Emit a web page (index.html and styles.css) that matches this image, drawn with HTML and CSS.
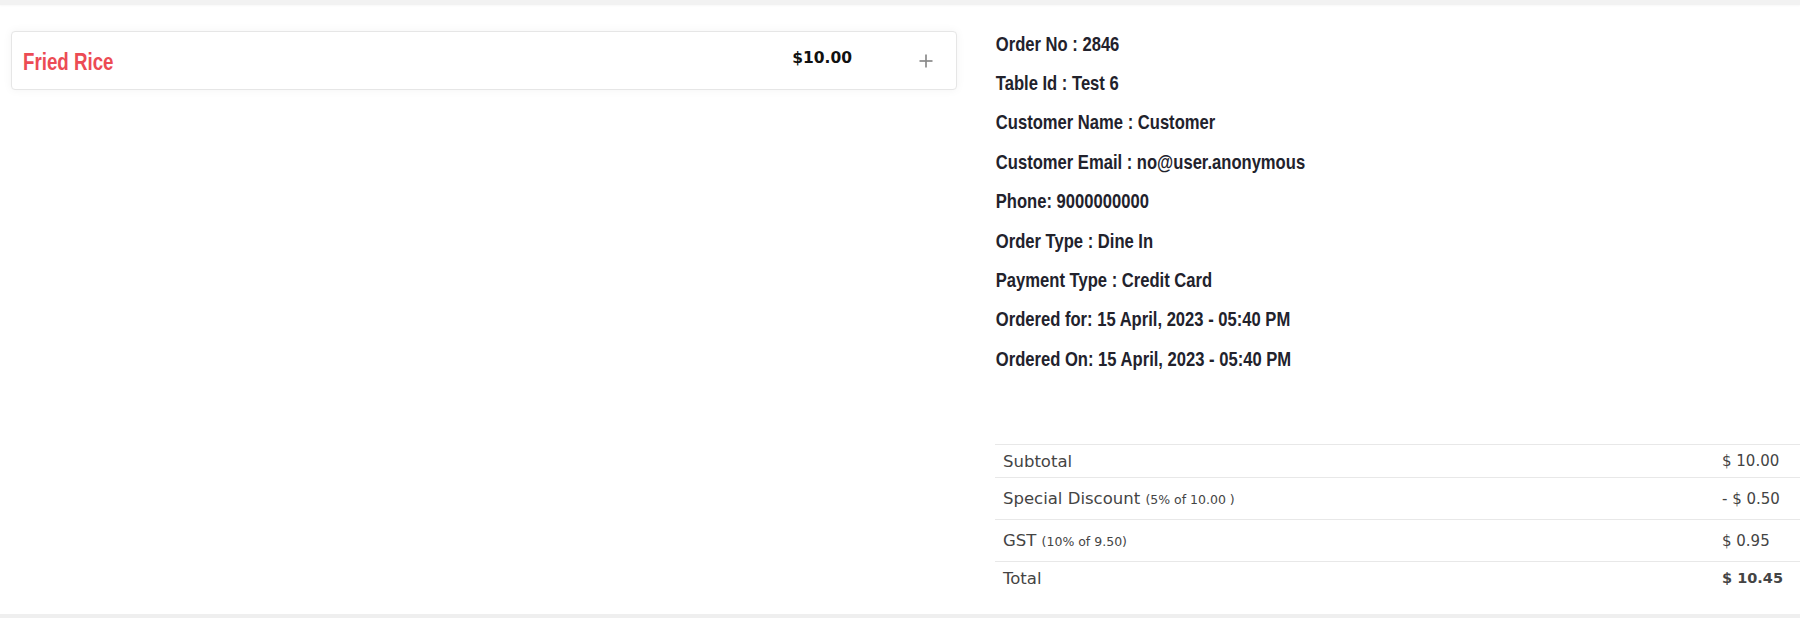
FILE: index.html
```html
<!DOCTYPE html>
<html lang="en">
<head>
<meta charset="utf-8">
<title>Order Details</title>
<link rel="stylesheet" href="styles.css">
</head>
<body>
<div class="topbar"></div>
<div class="main">
  <div class="items">
    <div class="item-card">
      <div class="item-name">Fried Rice</div>
      <div class="item-price">$10.00</div>
      <div class="item-add">
        <svg width="14" height="14" viewBox="0 0 14 14" aria-hidden="true">
          <line x1="7" y1="0.5" x2="7" y2="13.5" stroke="#8a8a8a" stroke-width="1.7"/>
          <line x1="0.5" y1="7" x2="13.5" y2="7" stroke="#8a8a8a" stroke-width="1.7"/>
        </svg>
      </div>
    </div>
  </div>
  <div class="details">
    <div class="info">
      <div class="info-line">Order No : 2846</div>
      <div class="info-line">Table Id : Test 6</div>
      <div class="info-line">Customer Name : Customer</div>
      <div class="info-line">Customer Email : no@user.anonymous</div>
      <div class="info-line">Phone: 9000000000</div>
      <div class="info-line">Order Type : Dine In</div>
      <div class="info-line">Payment Type : Credit Card</div>
      <div class="info-line">Ordered for: 15 April, 2023 - 05:40 PM</div>
      <div class="info-line">Ordered On: 15 April, 2023 - 05:40 PM</div>
    </div>
    <table class="totals">
      <tr class="row-short">
        <td class="label">Subtotal</td>
        <td class="amount">$ 10.00</td>
      </tr>
      <tr class="row-tall">
        <td class="label">Special Discount <span class="note">(5% of 10.00 )</span></td>
        <td class="amount">- $ 0.50</td>
      </tr>
      <tr class="row-tall">
        <td class="label">GST <span class="note">(10% of 9.50)</span></td>
        <td class="amount">$ 0.95</td>
      </tr>
      <tr class="row-short">
        <td class="label">Total</td>
        <td class="amount amount-total">$ 10.45</td>
      </tr>
    </table>
  </div>
</div>
</body>
</html>
```

FILE: styles.css
```css
html, body {
  margin: 0;
  padding: 0;
  background: #ffffff;
}

body {
  font-family: "DejaVu Sans", "Open Sans", sans-serif;
  color: #222;
}

.topbar {
  height: 5px;
  background: #f2f2f2;
  box-shadow: 0 1px 2px rgba(0, 0, 0, 0.03);
}

.main {
  display: flex;
  border-bottom: 4px solid #efefef;
}

.items {
  width: 946px;
  padding: 26px 0 0 11px;
  flex: none;
}

.item-card {
  display: flex;
  align-items: center;
  height: 57px;
  border: 1px solid #e6e6e6;
  border-radius: 4px;
  box-shadow: 0 0 10px rgba(0, 0, 0, 0.05);
  padding: 0 23px 0 11px;
  background: #fff;
}

.item-name {
  flex: 1;
  font-family: "Liberation Sans", Arial, sans-serif;
  font-weight: 700;
  font-size: 24px;
  color: #ec4b54;
  padding-top: 3px;
  transform: scaleX(0.78);
  transform-origin: left center;
}

.item-price {
  font-family: "DejaVu Sans", sans-serif;
  font-weight: 700;
  font-size: 15.5px;
  color: #111;
  margin-bottom: 5px;
}

.item-add {
  margin-left: 67px;
  width: 14px;
  height: 14px;
  display: flex;
}

.details {
  flex: 1;
  margin-left: 38px;
  padding: 18.6px 0 20px 0;
}

.info-line {
  font-family: "Liberation Sans", Arial, sans-serif;
  font-weight: 700;
  font-size: 21px;
  line-height: 39.4px;
  color: #22222c;
  padding-left: 1px;
  transform: scaleX(0.79);
  transform-origin: left center;
}

.totals {
  width: 100%;
  margin-top: 65.8px;
  border-collapse: collapse;
}

.totals td {
  border-top: 1px solid #e8e8e8;
  padding: 0 8px;
  vertical-align: middle;
  color: #444;
}

.row-short td {
  height: 32px;
}

.row-tall td {
  height: 41px;
}

.label {
  font-size: 16.5px;
}

.note {
  font-size: 12.5px;
}

.amount {
  width: 70px;
  font-size: 15px;
  color: #555;
}

.amount-total {
  font-weight: 700;
  font-size: 14.5px;
  color: #222;
}
```
